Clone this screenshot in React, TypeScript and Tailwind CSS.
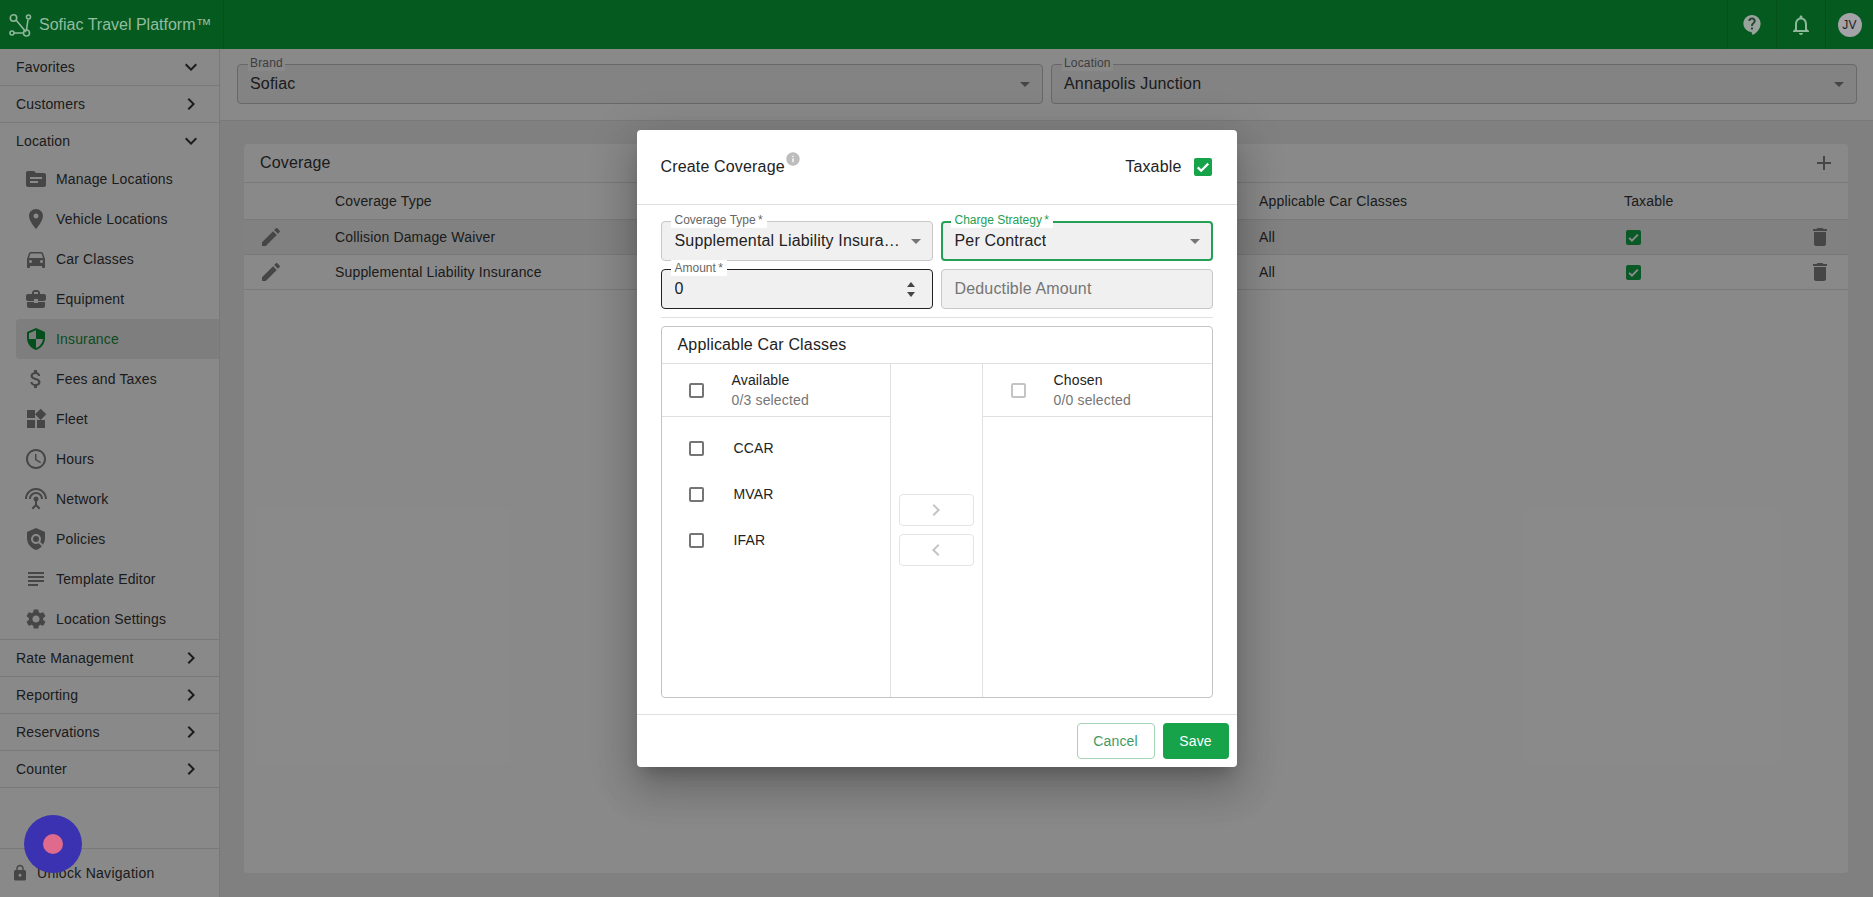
import type { ReactNode } from "react";

const paths = {
  topic: "M20 6h-8l-2-2H4c-1.1 0-1.99.9-1.99 2L2 18c0 1.1.9 2 2 2h16c1.1 0 2-.9 2-2V8c0-1.1-.9-2-2-2zm-6 10H6v-2h8v2zm4-4H6v-2h12v2z",
  room: "M12 2C8.13 2 5 5.13 5 9c0 5.25 7 13 7 13s7-7.75 7-13c0-3.87-3.13-7-7-7zm0 9.5c-1.38 0-2.5-1.12-2.5-2.5s1.12-2.5 2.5-2.5 2.5 1.12 2.5 2.5-1.12 2.5-2.5 2.5z",
  car: "M18.92 6.01C18.72 5.42 18.16 5 17.5 5h-11c-.66 0-1.21.42-1.42 1.01L3 12v8c0 .55.45 1 1 1h1c.55 0 1-.45 1-1v-1h12v1c0 .55.45 1 1 1h1c.55 0 1-.45 1-1v-8l-2.08-5.99zM6.5 16c-.83 0-1.5-.67-1.5-1.5S5.67 13 6.5 13s1.5.67 1.5 1.5S7.33 16 6.5 16zm11 0c-.83 0-1.5-.67-1.5-1.5s.67-1.5 1.5-1.5 1.5.67 1.5 1.5-.67 1.5-1.5 1.5zM5 11l1.5-4.5h11L19 11H5z",
  business: "M10 16v-1H3.01L3 19c0 1.11.89 2 2 2h14c1.11 0 2-.89 2-2v-4h-7v1h-4zm10-9h-4.01V5l-2-2h-4l-2 2v2H4c-1.1 0-2 .9-2 2v3c0 1.11.89 2 2 2h6v-2h4v2h6c1.1 0 2-.9 2-2V9c0-1.1-.9-2-2-2zm-6 0h-4V5h4v2z",
  security: "M12 1L3 5v6c0 5.55 3.84 10.74 9 12 5.16-1.26 9-6.45 9-12V5l-9-4zm0 10.99h7c-.53 4.12-3.28 7.79-7 8.94V12H5V6.3l7-3.11v8.8z",
  money: "M11.8 10.9c-2.27-.59-3-1.2-3-2.15 0-1.09 1.01-1.85 2.7-1.85 1.78 0 2.44.85 2.5 2.1h2.21c-.07-1.72-1.12-3.3-3.21-3.81V3h-3v2.16c-1.94.42-3.5 1.68-3.5 3.61 0 2.31 1.91 3.46 4.7 4.13 2.5.6 3 1.48 3 2.41 0 .69-.49 1.79-2.7 1.79-2.06 0-2.87-.92-2.98-2.1h-2.2c.12 2.19 1.76 3.42 3.68 3.83V21h3v-2.15c1.95-.37 3.5-1.5 3.5-3.55 0-2.84-2.43-3.81-4.7-4.4z",
  widgets: "M13 13v8h8v-8h-8zM3 21h8v-8H3v8zM3 3v8h8V3H3zm13.66-1.31L11 7.34 16.66 13l5.66-5.66-5.66-5.65z",
  clock: "M11.99 2C6.47 2 2 6.48 2 12s4.47 10 9.99 10C17.52 22 22 17.52 22 12S17.52 2 11.99 2zM12 20c-4.42 0-8-3.58-8-8s3.58-8 8-8 8 3.58 8 8-3.58 8-8 8zm.5-13H11v6l5.25 3.15.75-1.23-4.5-2.67z",
  antenna: "M12 5c-3.87 0-7 3.13-7 7h2c0-2.76 2.24-5 5-5s5 2.24 5 5h2c0-3.87-3.13-7-7-7zm1 9.29c.88-.39 1.5-1.26 1.5-2.29 0-1.38-1.12-2.5-2.5-2.5S9.5 10.62 9.5 12c0 1.02.62 1.9 1.5 2.29v3.3L7.59 21 9 22.41l3-3 3 3L16.41 21 13 17.59v-3.3zM12 1C5.93 1 1 5.93 1 12h2c0-4.97 4.03-9 9-9s9 4.03 9 9h2c0-6.07-4.93-11-11-11z",
  policy: "M12 1L3 5v6c0 5.55 3.84 10.74 9 12 2.3-.56 4.33-1.9 5.88-3.71l-3.12-3.12c-1.94 1.29-4.58 1.07-6.29-.64-1.95-1.95-1.95-5.12 0-7.07 1.95-1.95 5.12-1.95 7.07 0 1.71 1.71 1.92 4.35.64 6.29l2.9 2.9C20.29 15.69 21 13.38 21 11V5l-9-4zM12 15a3 3 0 1 0 0-6 3 3 0 0 0 0 6z",
  subject: "M14 17H4v2h10v-2zm6-8H4v2h16V9zM4 15h16v-2H4v2zM4 5v2h16V5H4z",
  settings: "M19.14 12.94c.04-.3.06-.61.06-.94 0-.32-.02-.64-.07-.94l2.03-1.58c.18-.14.23-.41.12-.61l-1.92-3.32c-.12-.22-.37-.29-.59-.22l-2.39.96c-.5-.38-1.03-.7-1.62-.94l-.36-2.54c-.04-.24-.24-.41-.48-.41h-3.84c-.24 0-.43.17-.47.41l-.36 2.54c-.59.24-1.13.57-1.62.94l-2.39-.96c-.22-.08-.47 0-.59.22L2.74 8.87c-.12.21-.08.47.12.61l2.03 1.58c-.05.3-.09.63-.09.94s.02.64.07.94l-2.03 1.58c-.18.14-.23.41-.12.61l1.92 3.32c.12.22.37.29.59.22l2.39-.96c.5.38 1.03.7 1.62.94l.36 2.54c.05.24.24.41.48.41h3.84c.24 0 .44-.17.47-.41l.36-2.54c.59-.24 1.13-.56 1.62-.94l2.39.96c.22.08.47 0 .59-.22l1.92-3.32c.12-.22.07-.47-.12-.61l-2.01-1.58zM12 15.6c-1.98 0-3.6-1.62-3.6-3.6s1.62-3.6 3.6-3.6 3.6 1.62 3.6 3.6-1.62 3.6-3.6 3.6z",
  lock: "M18 8h-1V6c0-2.76-2.24-5-5-5S7 3.24 7 6v2H6c-1.1 0-2 .9-2 2v10c0 1.1.9 2 2 2h12c1.1 0 2-.9 2-2V10c0-1.1-.9-2-2-2zm-6 9c-1.1 0-2-.9-2-2s.9-2 2-2 2 .9 2 2-.9 2-2 2zm3.1-9H8.9V6c0-1.71 1.39-3.1 3.1-3.1 1.71 0 3.1 1.39 3.1 3.1v2z",
  edit: "M3 17.25V21h3.75L17.81 9.94l-3.75-3.75L3 17.25zM20.71 7.04c.39-.39.39-1.02 0-1.41l-2.34-2.34c-.39-.39-1.02-.39-1.41 0l-1.83 1.83 3.75 3.75 1.83-1.83z",
  trash: "M6 19c0 1.1.9 2 2 2h8c1.1 0 2-.9 2-2V7H6v12zM19 4h-3.5l-1-1h-5l-1 1H5v2h14V4z",
  add: "M19 13h-6v6h-2v-6H5v-2h6V5h2v6h6v2z",
  down: "M16.59 8.59L12 13.17 7.41 8.59 6 10l6 6 6-6z",
  right: "M10 6L8.59 7.41 13.17 12l-4.58 4.59L10 18l6-6z",
  left: "M15.41 7.41L14 6l-6 6 6 6 1.41-1.41L10.83 12z",
  drop: "M7 10l5 5 5-5z",
  bell: "M12 22c1.1 0 2-.9 2-2h-4c0 1.1.89 2 2 2zm6-6v-5c0-3.07-1.64-5.64-4.5-6.32V4c0-.83-.67-1.5-1.5-1.5s-1.5.67-1.5 1.5v.68C7.63 5.36 6 7.92 6 11v5l-2 2v1h16v-1l-2-2zm-2 1H8v-6c0-2.48 1.51-4.5 4-4.5s4 2.02 4 4.5v6z",
  info: "M12 2C6.48 2 2 6.48 2 12s4.48 10 10 10 10-4.48 10-10S17.52 2 12 2zm1 15h-2v-6h2v6zm0-8h-2V7h2v2z",
};

const Icon = ({ d, className = "w-6 h-6 text-[#808080]" }: { d: string; className?: string }) => (
  <svg viewBox="0 0 24 24" fill="currentColor" className={className}>
    <path d={d} />
  </svg>
);

const Logo = () => (
  <svg viewBox="0 0 24 24" fill="none" stroke="currentColor" strokeWidth="1.6" className="w-[24px] h-[24px] text-[#8fb79a]">
    <path d="M8 7l10 12M20 6.500L18.500 17M6 20h9.500" />
    <circle cx="5.5" cy="5" r="3.2" />
    <circle cx="20.5" cy="4" r="2" />
    <circle cx="4" cy="20" r="2" />
    <circle cx="18.5" cy="20" r="3" />
  </svg>
);

const HelpBubble = () => (
  <svg viewBox="0 0 24 24" className="w-[24px] h-[24px]">
    <path fill="#98a39c" d="M12 2c-4.700 0-8.600 3.800-8.600 8.500 0 4.500 3.500 8.200 8 8.500l1.200 3c4-1.800 8-6.200 8-11.500C20.600 5.800 16.700 2 12 2z" />
    <path fill="#2c4435" d="M11 14.500h2v2h-2zM12 4.500c-2.100 0-3.700 1.500-3.700 3.500h2c0-.9.700-1.600 1.700-1.600s1.700.7 1.700 1.600c0 1.800-2.700 1.700-2.700 5h2c0-2.300 2.700-2.700 2.700-5C15.700 6 14.100 4.500 12 4.500z" />
  </svg>
);

const Section = ({ label, open = false }: { label: string; open?: boolean }) => (
  <div className="h-[37px] flex items-center justify-between pl-4 pr-4 border-b border-[#dcdcdc] text-[14px] text-[#333] shrink-0">
    <span>{label}</span>
    <Icon d={open ? paths.down : paths.right} className="w-6 h-6 text-[#333]" />
  </div>
);

const locationItems = [
  { label: "Manage Locations", icon: paths.topic },
  { label: "Vehicle Locations", icon: paths.room },
  { label: "Car Classes", icon: paths.car },
  { label: "Equipment", icon: paths.business },
  { label: "Insurance", icon: paths.security, active: true },
  { label: "Fees and Taxes", icon: paths.money },
  { label: "Fleet", icon: paths.widgets },
  { label: "Hours", icon: paths.clock },
  { label: "Network", icon: paths.antenna },
  { label: "Policies", icon: paths.policy },
  { label: "Template Editor", icon: paths.subject },
  { label: "Location Settings", icon: paths.settings },
];

const Sidebar = () => (
  <aside className="w-[220px] shrink-0 bg-[#fafafa] border-r border-[#dcdcdc] flex flex-col">
    <Section label="Favorites" open />
    <Section label="Customers" />
    <div className="h-[36px] flex items-center justify-between pl-4 pr-4 text-[14px] text-[#333]">
      <span>Location</span>
      <Icon d={paths.down} className="w-6 h-6 text-[#333]" />
    </div>
    {locationItems.map((item) => (
      <div
        key={item.label}
        className={`h-[40px] ml-4 pl-2 flex items-center gap-2 text-[14px] rounded-l ${item.active ? "bg-[#e6e6e6] text-[#158a3e]" : "text-[#333]"}`}
      >
        <Icon d={item.icon} className={`w-6 h-6 ${item.active ? "text-[#0a8f35]" : "text-[#808080]"}`} />
        <span>{item.label}</span>
      </div>
    ))}
    <div className="border-t border-[#dcdcdc]" />
    <Section label="Rate Management" />
    <Section label="Reporting" />
    <Section label="Reservations" />
    <Section label="Counter" />
    <div className="flex-1" />
    <div className="h-[49px] border-t border-[#dcdcdc] flex items-center pl-[11px] gap-2 text-[14px] text-[#333] tracking-[0.02em]">
      <Icon d={paths.lock} className="w-[18px] h-[18px] text-[#808080]" />
      <span>Unlock Navigation</span>
    </div>
  </aside>
);

const FilterField = ({ label, value }: { label: string; value: string }) => (
  <div className="relative flex-1 h-[40px] bg-[#eeeeee] border border-[#bdbdbd] rounded flex items-center justify-between pl-3 pr-[5px]">
    <span className="absolute left-2.5 -top-[10px] px-0.5 bg-[#fafafa] text-[12px] leading-[16px] text-[#707070]">{label}</span>
    <span className="text-[16px] text-[#333]">{value}</span>
    <Icon d={paths.drop} className="w-6 h-6 text-[#808080]" />
  </div>
);

const GreenCheck = ({ size }: { size: string }) => (
  <span className={`${size} inline-flex items-center justify-center rounded-[2px] bg-[#16a34a]`}>
    <svg viewBox="0 0 24 24" fill="none" stroke="#fff" strokeWidth="3" className="w-full h-full">
      <path d="M5 12.500l4.500 4.500L19 7.500" />
    </svg>
  </span>
);

const TableRow = ({ name, shaded }: { name: string; shaded?: boolean }) => (
  <div className={`grid grid-cols-[91px_924px_365px_1fr] items-center h-[35px] border-b border-[#dcdcdc] text-[14px] text-[#333] ${shaded ? "bg-[#ebebeb]" : ""}`}>
    <span className="pl-[15px]"><Icon d={paths.edit} /></span>
    <span>{name}</span>
    <span>All</span>
    <div className="flex items-center justify-between pr-[16px] pl-[2px]">
      <GreenCheck size="w-[15px] h-[15px]" />
      <Icon d={paths.trash} />
    </div>
  </div>
);

const Coverage = () => (
  <div className="flex-1 bg-[#fafafa] rounded flex flex-col">
    <div className="h-[39px] shrink-0 flex items-center justify-between pl-4 pr-3 border-b border-[#dcdcdc]">
      <span className="text-[16px] text-[#333]">Coverage</span>
      <Icon d={paths.add} />
    </div>
    <div className="h-[37px] shrink-0 grid grid-cols-[91px_924px_365px_1fr] items-center border-b border-[#dcdcdc] text-[14px] text-[#333]">
      <span />
      <span>Coverage Type</span>
      <span>Applicable Car Classes</span>
      <span>Taxable</span>
    </div>
    <TableRow name="Collision Damage Waiver" shaded />
    <TableRow name="Supplemental Liability Insurance" />
  </div>
);

const Field = ({ label, value, variant = "idle", placeholder, children }: { label?: string; value?: string; variant?: "idle" | "focus" | "dark"; placeholder?: string; children?: ReactNode }) => {
  const border = variant === "focus" ? "border-2 border-[#23a055] pl-[12px] pr-1" : variant === "dark" ? "border border-[#222] pl-[13px] pr-[5px]" : "border border-[#c8c8c8] pl-[13px] pr-[4px]";
  return (
    <div className={`relative h-[40px] bg-[#f0f0f0] rounded flex items-center justify-between ${border}`}>
      {label && (
        <span className={`absolute px-1 bg-white text-[12px] leading-[16px] tracking-normal ${variant === "focus" ? "left-[8px] -top-[11px] text-[#23a055]" : "left-[9px] -top-[10px] text-[#666]"}`}>
          {label}{"\u2009*"}
        </span>
      )}
      {placeholder ? (
        <span className="text-[16px] text-[#757575]">{placeholder}</span>
      ) : (
        <span className="text-[16px] text-[#222] truncate max-w-[227px] -mt-px">{value}</span>
      )}
      {children}
    </div>
  );
};

const Box = ({ muted }: { muted?: boolean }) => (
  <span className={`block w-[15px] h-[15px] rounded-[2px] border-2 ${muted ? "border-[#c4c4c4]" : "border-[#757575]"}`} />
);

const CarRow = ({ name }: { name: string }) => (
  <div className="h-[46px] flex items-center pl-[27px] text-[14px] text-[#222]">
    <Box />
    <span className="ml-[30px]">{name}</span>
  </div>
);

const ListHead = ({ title, sub, muted }: { title: string; sub: string; muted?: boolean }) => (
  <div className={`h-[53px] shrink-0 border-b border-[#e0e0e0] flex items-center ${muted ? "pl-[28px]" : "pl-[27px]"}`}>
    <Box muted={muted} />
    <div className="ml-[28px] text-[14px] leading-[20px]">
      <div className="text-[#222]">{title}</div>
      <div className="text-[#757575]">{sub}</div>
    </div>
  </div>
);

const MoveButton = ({ d }: { d: string }) => (
  <button className="w-[75px] h-[32px] rounded border border-[#e4e4e4] flex items-center justify-center bg-white">
    <Icon d={d} className="w-6 h-6 text-[#c4c4c4]" />
  </button>
);

const Dialog = () => (
  <div className="absolute inset-0 bg-black/45 flex items-center justify-center">
    <div className="w-[600px] h-[637px] bg-white rounded shadow-[0_11px_15px_-7px_rgba(0,0,0,0.2),0_24px_38px_3px_rgba(0,0,0,0.14),0_9px_46px_8px_rgba(0,0,0,0.12)] flex flex-col">
      <div className="h-[75px] shrink-0 border-b border-[#e0e0e0] flex items-center justify-between pl-6 pr-[25px]">
        <div className="flex items-start text-[16px] text-[#222]">
          <span>Create Coverage</span>
          <Icon d={paths.info} className="w-[16px] h-[16px] -mt-1 text-[#bdbdbd]" />
        </div>
        <div className="flex items-center gap-3 text-[16px] text-[#222]">
          <span>Taxable</span>
          <GreenCheck size="w-[18px] h-[18px]" />
        </div>
      </div>
      <div className="flex-1 px-6 pt-[16px] flex flex-col">
        <div className="grid grid-cols-2 gap-2">
          <Field label="Coverage Type" value="Supplemental Liability Insurance">
            <Icon d={paths.drop} className="w-6 h-6 text-[#757575]" />
          </Field>
          <Field label="Charge Strategy" value="Per Contract" variant="focus">
            <Icon d={paths.drop} className="w-6 h-6 text-[#757575]" />
          </Field>
          <Field label="Amount" value="0" variant="dark">
            <span className="flex flex-col gap-[5px] pr-[12px]">
              <span className="w-0 h-0 border-x-[4px] border-x-transparent border-b-[5px] border-b-[#444]" />
              <span className="w-0 h-0 border-x-[4px] border-x-transparent border-t-[5px] border-t-[#444]" />
            </span>
          </Field>
          <Field placeholder="Deductible Amount" />
        </div>
        <div className="mt-2 border-t border-[#e0e0e0]" />
        <div className="mt-2 h-[372px] border border-[#c4c4c4] rounded flex flex-col">
          <div className="h-[37px] shrink-0 border-b border-[#e0e0e0] flex items-center pl-4 text-[16px] text-[#222]">
            Applicable Car Classes
          </div>
          <div className="flex-1 flex">
            <div className="w-[228px] flex flex-col">
              <ListHead title="Available" sub="0/3 selected" />
              <div className="pt-2">
                <CarRow name="CCAR" />
                <CarRow name="MVAR" />
                <CarRow name="IFAR" />
              </div>
            </div>
            <div className="w-[93px] border-x border-[#e0e0e0] flex flex-col items-center justify-center gap-2 pb-[2px]">
              <MoveButton d={paths.right} />
              <MoveButton d={paths.left} />
            </div>
            <div className="flex-1">
              <ListHead title="Chosen" sub="0/0 selected" muted />
            </div>
          </div>
        </div>
      </div>
      <div className="h-[53px] shrink-0 border-t border-[#e0e0e0] flex items-start justify-end gap-2 pt-2 pr-2 text-[14px]">
        <button className="w-[78px] h-[36px] rounded border border-[#a4d4b5] text-[#3f9a64] bg-white">Cancel</button>
        <button className="w-[66px] h-[36px] rounded bg-[#16a34a] text-white">Save</button>
      </div>
    </div>
  </div>
);

export default function App() {
  return (
    <div className="relative h-screen w-full overflow-hidden flex flex-col bg-[#e9e9e9] font-['Liberation_Sans',Arial,sans-serif] tracking-[0.01em]">
      <header className="relative z-10 h-[49px] shrink-0 bg-[#055a20] flex">
        <div className="w-[224px] border-r border-black/10 flex items-center pl-[8px] gap-[7px]">
          <Logo />
          <span className="text-[16px] tracking-normal text-[#94bd9f]">Sofiac Travel Platform™</span>
        </div>
        <div className="flex-1" />
        <div className="w-[49px] border-l border-black/10 flex items-center justify-center"><HelpBubble /></div>
        <div className="w-[49px] border-l border-black/10 flex items-center justify-center">
          <Icon d={paths.bell} className="w-6 h-6 text-[#8fb79a]" />
        </div>
        <div className="w-[48px] border-l border-black/10 flex items-center justify-center">
          <span className="w-[24px] h-[24px] rounded-full bg-[#a3a3a8] text-[#222] text-[12px] flex items-center justify-center">JV</span>
        </div>
      </header>
      <div className="flex-1 flex min-h-0">
        <Sidebar />
        <div className="flex-1 flex flex-col min-w-0">
          <div className="h-[72px] shrink-0 bg-[#fafafa] border-b border-[#dcdcdc] flex gap-2 pl-[17px] pr-4 pt-[15px]">
            <FilterField label="Brand" value="Sofiac" />
            <FilterField label="Location" value="Annapolis Junction" />
          </div>
          <div className="flex-1 flex pt-[23px] pb-6 pl-6 pr-[25px] min-h-0">
            <Coverage />
          </div>
        </div>
      </div>
      <Dialog />
      <div className="absolute left-[24px] top-[815px] w-[58px] h-[58px] rounded-full bg-[#3a32b0] flex items-center justify-center">
        <span className="w-5 h-5 rounded-full bg-[#e06a8c]" />
      </div>
    </div>
  );
}
